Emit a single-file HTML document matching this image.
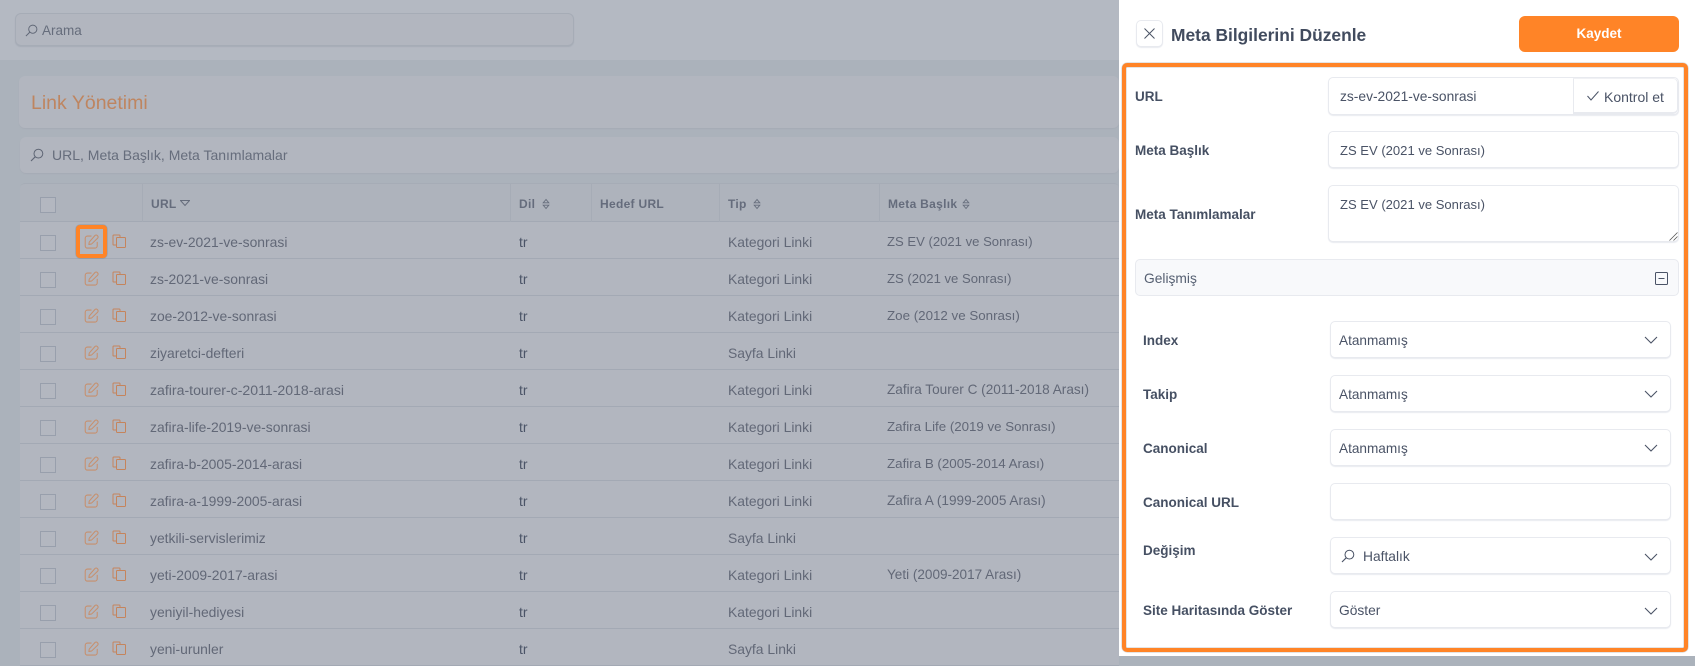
<!DOCTYPE html>
<html lang="tr"><head><meta charset="utf-8"><title>Meta Bilgilerini Düzenle</title>
<style>
*{box-sizing:border-box}
html,body{margin:0;padding:0;width:1695px;height:656px;overflow:hidden;background:#abb2bb;font-family:"Liberation Sans",sans-serif;font-size:14px}
.a{position:absolute}
.t{position:absolute;white-space:nowrap;line-height:20px}
#topbar{left:0;top:0;width:1119px;height:60px;background:#b4b9c2}
.card{position:absolute;background:#b2b6bf;border-radius:6px;box-shadow:0 1px 1px #a6acb6}
.row{position:absolute;left:20px;width:1099px;height:37px;background:#b2b6bf;border-bottom:1px solid #a3a9b4}
.row .t{top:10px;color:#626877;font-size:13.9px}
.row .u{left:130px}
.row .d{left:499px;color:#4b5467}
.row .k{left:708px}
.row .m{left:867px}
.cb{position:absolute;left:20px;top:13px;width:16px;height:16px;border:1px solid #989fac;background:#b3b7c0}
.row svg{position:absolute}
.row .e{left:64px;top:12px;color:#c78f6c}
.row .c{left:92px;top:12px;color:#c5845c}
.th{position:absolute;top:10px;line-height:20px;font-size:12px;font-weight:bold;color:#656c7c;letter-spacing:.3px;white-space:nowrap}
.vd{position:absolute;top:0;width:1px;height:39px;background:#a6acb6}
#panel{left:1119px;top:0;width:576px;height:656px;background:#fff}
.inp{position:absolute;background:#fff;border:1px solid #e8eaef;border-radius:5px;box-shadow:0 1px 1px #e9ebf0}
.lb{position:absolute;white-space:nowrap;line-height:20px;font-weight:bold;color:#465063;font-size:13.5px;margin-top:1px}
.val{position:absolute;white-space:nowrap;line-height:20px;color:#4a5366;font-size:13.8px;margin-top:1px}
</style></head><body>
<svg width="0" height="0" style="position:absolute">
<symbol id="ed" viewBox="0 0 16 16"><path d="M8 2.2H3.6A2.3 2.3 0 0 0 1.3 4.5v8.3a2.2 2.2 0 0 0 2.2 2.2h8.3a2.3 2.3 0 0 0 2.3-2.3V8.4M5.6 8.6 11.7 1.6a1.6 1.6 0 0 1 2.3-.1l.6.6a1.6 1.6 0 0 1 0 2.3L8.2 10.6l-3 .6z" fill="none" stroke="currentColor" stroke-width="1.1" stroke-linejoin="round"/></symbol>
<symbol id="cp" viewBox="0 0 14 14"><path d="M4 11H1.8a.8.8 0 0 1-.8-.8V1.8a.8.8 0 0 1 .8-.8h5.4a.8.8 0 0 1 .8.8V3" fill="none" stroke="currentColor" stroke-width="1"/><rect x="4.5" y="3.5" width="9" height="10" rx=".7" fill="none" stroke="currentColor" stroke-width="1"/></symbol>
<symbol id="se" viewBox="0 0 14 14"><circle cx="8.4" cy="5.6" r="4.4" fill="none" stroke="currentColor" stroke-width="1"/><path d="M5.2 8.8 1 13" fill="none" stroke="currentColor" stroke-width="1.1"/></symbol>
<symbol id="ch" viewBox="0 0 14 8"><path d="M1 1l6 6 6-6" fill="none" stroke="currentColor" stroke-width="1.1"/></symbol>
<symbol id="so" viewBox="0 0 8 12"><path d="M4 1.5 1.2 4.8h5.6zM4 10.5 1.2 7.2h5.6z" fill="none" stroke="currentColor" stroke-width=".9"/></symbol>
</svg>

<div class="a" id="topbar"></div>
<div class="card" style="left:15px;top:13px;width:559px;height:33px;border:1px solid #a6acb6"></div>
<svg class="a" style="left:25px;top:24px;color:#5f6675" width="13" height="13"><use href="#se"/></svg>
<div class="t" style="left:42px;top:21px;color:#666d7c;font-size:13.5px">Arama</div>

<div class="card" style="left:19px;top:76px;width:1100px;height:52px"></div>
<div class="t" style="left:31px;top:93px;font-size:19.5px;color:#be8560">Link Yönetimi</div>

<div class="card" style="left:20px;top:137px;width:1099px;height:36px"></div>
<svg class="a" style="left:30px;top:148px;color:#5f6675" width="14" height="14"><use href="#se"/></svg>
<div class="t" style="left:52px;top:145px;color:#666d7c;font-size:14px">URL, Meta Başlık, Meta Tanımlamalar</div>

<div class="a" style="left:20px;top:183px;width:1099px;height:39px;background:#aeb3bc;border-top:1px solid #a6acb6;border-bottom:1px solid #a3a9b4;border-radius:5px 5px 0 0">
  <div class="cb" style="top:13px"></div>
  <div class="vd" style="left:122px"></div>
  <div class="vd" style="left:490px"></div>
  <div class="vd" style="left:571px"></div>
  <div class="vd" style="left:699px"></div>
  <div class="vd" style="left:859px"></div>
  <div class="th" style="left:131px">URL</div>
  <svg class="a" style="left:160px;top:16px;color:#666d7c" width="10" height="7"><path d="M.5.5h9L5 5.5z" fill="none" stroke="currentColor"/></svg>
  <div class="th" style="left:499px">Dil</div>
  <svg class="a" style="left:522px;top:14px;color:#666d7c" width="8" height="12"><use href="#so"/></svg>
  <div class="th" style="left:580px">Hedef URL</div>
  <div class="th" style="left:708px">Tip</div>
  <svg class="a" style="left:733px;top:14px;color:#666d7c" width="8" height="12"><use href="#so"/></svg>
  <div class="th" style="left:868px">Meta Başlık</div>
  <svg class="a" style="left:942px;top:14px;color:#666d7c" width="8" height="12"><use href="#so"/></svg>
</div>

<div class="row" style="top:222px"><div class="cb"></div><svg class="e" width="15" height="15"><use href="#ed"/></svg><svg class="c" width="14" height="14"><use href="#cp"/></svg><div class="t u">zs-ev-2021-ve-sonrasi</div><div class="t d">tr</div><div class="t k">Kategori Linki</div><div class="t m" style="font-size:13.1px">ZS EV (2021 ve Sonrası)</div></div>
<div class="row" style="top:259px"><div class="cb"></div><svg class="e" width="15" height="15"><use href="#ed"/></svg><svg class="c" width="14" height="14"><use href="#cp"/></svg><div class="t u">zs-2021-ve-sonrasi</div><div class="t d">tr</div><div class="t k">Kategori Linki</div><div class="t m" style="font-size:13.1px">ZS (2021 ve Sonrası)</div></div>
<div class="row" style="top:296px"><div class="cb"></div><svg class="e" width="15" height="15"><use href="#ed"/></svg><svg class="c" width="14" height="14"><use href="#cp"/></svg><div class="t u">zoe-2012-ve-sonrasi</div><div class="t d">tr</div><div class="t k">Kategori Linki</div><div class="t m" style="font-size:13.35px">Zoe (2012 ve Sonrası)</div></div>
<div class="row" style="top:333px"><div class="cb"></div><svg class="e" width="15" height="15"><use href="#ed"/></svg><svg class="c" width="14" height="14"><use href="#cp"/></svg><div class="t u">ziyaretci-defteri</div><div class="t d">tr</div><div class="t k">Sayfa Linki</div></div>
<div class="row" style="top:370px"><div class="cb"></div><svg class="e" width="15" height="15"><use href="#ed"/></svg><svg class="c" width="14" height="14"><use href="#cp"/></svg><div class="t u" style="font-size:14.1px">zafira-tourer-c-2011-2018-arasi</div><div class="t d">tr</div><div class="t k">Kategori Linki</div><div class="t m" style="font-size:13.6px">Zafira Tourer C (2011-2018 Arası)</div></div>
<div class="row" style="top:407px"><div class="cb"></div><svg class="e" width="15" height="15"><use href="#ed"/></svg><svg class="c" width="14" height="14"><use href="#cp"/></svg><div class="t u">zafira-life-2019-ve-sonrasi</div><div class="t d">tr</div><div class="t k">Kategori Linki</div><div class="t m" style="font-size:13.3px">Zafira Life (2019 ve Sonrası)</div></div>
<div class="row" style="top:444px"><div class="cb"></div><svg class="e" width="15" height="15"><use href="#ed"/></svg><svg class="c" width="14" height="14"><use href="#cp"/></svg><div class="t u">zafira-b-2005-2014-arasi</div><div class="t d">tr</div><div class="t k">Kategori Linki</div><div class="t m" style="font-size:13.35px">Zafira B (2005-2014 Arası)</div></div>
<div class="row" style="top:481px"><div class="cb"></div><svg class="e" width="15" height="15"><use href="#ed"/></svg><svg class="c" width="14" height="14"><use href="#cp"/></svg><div class="t u">zafira-a-1999-2005-arasi</div><div class="t d">tr</div><div class="t k">Kategori Linki</div><div class="t m" style="font-size:13.6px">Zafira A (1999-2005 Arası)</div></div>
<div class="row" style="top:518px"><div class="cb"></div><svg class="e" width="15" height="15"><use href="#ed"/></svg><svg class="c" width="14" height="14"><use href="#cp"/></svg><div class="t u">yetkili-servislerimiz</div><div class="t d">tr</div><div class="t k">Sayfa Linki</div></div>
<div class="row" style="top:555px"><div class="cb"></div><svg class="e" width="15" height="15"><use href="#ed"/></svg><svg class="c" width="14" height="14"><use href="#cp"/></svg><div class="t u">yeti-2009-2017-arasi</div><div class="t d">tr</div><div class="t k">Kategori Linki</div><div class="t m" style="font-size:13.55px">Yeti (2009-2017 Arası)</div></div>
<div class="row" style="top:592px"><div class="cb"></div><svg class="e" width="15" height="15"><use href="#ed"/></svg><svg class="c" width="14" height="14"><use href="#cp"/></svg><div class="t u">yeniyil-hediyesi</div><div class="t d">tr</div><div class="t k">Kategori Linki</div></div>
<div class="row" style="top:629px"><div class="cb"></div><svg class="e" width="15" height="15"><use href="#ed"/></svg><svg class="c" width="14" height="14"><use href="#cp"/></svg><div class="t u">yeni-urunler</div><div class="t d">tr</div><div class="t k">Sayfa Linki</div></div>

<div class="a" style="left:76px;top:225px;width:31px;height:33px;border:4px solid #ff8427;border-radius:4px;box-shadow:0 0 1px 0 #555"></div>

<div class="a" id="panel"></div>
<div class="a" style="left:1136px;top:20px;width:27px;height:27px;border:1px solid #e8eaef;border-radius:5px;box-shadow:0 1px 1px #e9ebf0;background:#fff"></div>
<svg class="a" style="left:1144px;top:28px;color:#4a5366" width="11" height="11"><path d="M.5.5l10 10M10.5.5l-10 10" fill="none" stroke="currentColor" stroke-width="1"/></svg>
<div class="t" style="left:1171px;top:25px;font-size:17.4px;font-weight:bold;color:#414b5e">Meta Bilgilerini Düzenle</div>
<div class="a" style="left:1519px;top:16px;width:160px;height:36px;background:#ff8427;border-radius:6px;color:#fff;font-weight:bold;font-size:13.5px;text-align:center;line-height:36px">Kaydet</div>

<div class="a" style="left:1122px;top:63px;width:566px;height:589px;border:4px solid #ff8427;border-radius:5px;box-shadow:0 0 1px 0 #555,inset 0 0 1px 0 #555"></div>

<div class="lb" style="left:1135px;top:86px">URL</div>
<div class="inp" style="left:1328px;top:77px;width:351px;height:38px"></div>
<div class="a" style="left:1573px;top:78px;width:105px;height:36px;background:#fff;border-left:1px solid #e8eaef;border-bottom:2px solid #e8eaef;border-top:1px solid #f0f1f4;border-right:1px solid #e8eaef;border-radius:0 5px 5px 0"></div>
<div class="val" style="left:1340px;top:86px">zs-ev-2021-ve-sonrasi</div>
<svg class="a" style="left:1587px;top:91px;color:#4a5366" width="12" height="10"><path d="M.5 5l3.5 4L11.5.5" fill="none" stroke="currentColor" stroke-width="1"/></svg>
<div class="val" style="left:1604px;top:86px;font-size:14px">Kontrol et</div>

<div class="lb" style="left:1135px;top:140px">Meta Başlık</div>
<div class="inp" style="left:1328px;top:131px;width:351px;height:37px"></div>
<div class="val" style="left:1340px;top:140px;font-size:13.05px">ZS EV (2021 ve Sonrası)</div>

<div class="lb" style="left:1135px;top:204px">Meta Tanımlamalar</div>
<div class="inp" style="left:1328px;top:185px;width:351px;height:57px"></div>
<div class="val" style="left:1340px;top:194px;font-size:13.05px">ZS EV (2021 ve Sonrası)</div>
<svg class="a" style="left:1669px;top:232px;color:#555" width="9" height="9"><path d="M8.5.5l-8 8M8.5 4.5l-4 4" fill="none" stroke="currentColor" stroke-width=".8"/></svg>

<div class="a" style="left:1135px;top:259px;width:544px;height:37px;background:#f8f9fb;border:1px solid #e8eaef;border-radius:5px"></div>
<div class="val" style="left:1144px;top:268px;color:#566072">Gelişmiş</div>
<svg class="a" style="left:1655px;top:272px;color:#4a5366" width="13" height="13"><rect x=".5" y=".5" width="12" height="12" rx="1" fill="none" stroke="currentColor"/><path d="M3.5 6.5h6" stroke="currentColor"/></svg>

<div class="lb" style="left:1143px;top:330px">Index</div>
<div class="inp" style="left:1330px;top:321px;width:341px;height:37px"></div>
<div class="val" style="left:1339px;top:330px;font-size:13.6px">Atanmamış</div>
<svg class="a" style="left:1644px;top:336px;color:#4a5366" width="14" height="8"><use href="#ch"/></svg>

<div class="lb" style="left:1143px;top:384px">Takip</div>
<div class="inp" style="left:1330px;top:375px;width:341px;height:37px"></div>
<div class="val" style="left:1339px;top:384px;font-size:13.6px">Atanmamış</div>
<svg class="a" style="left:1644px;top:390px;color:#4a5366" width="14" height="8"><use href="#ch"/></svg>

<div class="lb" style="left:1143px;top:438px">Canonical</div>
<div class="inp" style="left:1330px;top:429px;width:341px;height:37px"></div>
<div class="val" style="left:1339px;top:438px;font-size:13.6px">Atanmamış</div>
<svg class="a" style="left:1644px;top:444px;color:#4a5366" width="14" height="8"><use href="#ch"/></svg>

<div class="lb" style="left:1143px;top:492px">Canonical URL</div>
<div class="inp" style="left:1330px;top:483px;width:341px;height:37px"></div>

<div class="lb" style="left:1143px;top:540px">Değişim</div>
<div class="inp" style="left:1330px;top:537px;width:341px;height:37px"></div>
<svg class="a" style="left:1341px;top:549px;color:#4a5366" width="14" height="14"><use href="#se"/></svg>
<div class="val" style="left:1363px;top:546px">Haftalık</div>
<svg class="a" style="left:1644px;top:553px;color:#4a5366" width="14" height="8"><use href="#ch"/></svg>

<div class="lb" style="left:1143px;top:600px">Site Haritasında Göster</div>
<div class="inp" style="left:1330px;top:591px;width:341px;height:37px"></div>
<div class="val" style="left:1339px;top:600px">Göster</div>
<svg class="a" style="left:1644px;top:607px;color:#4a5366" width="14" height="8"><use href="#ch"/></svg>
</body></html>
